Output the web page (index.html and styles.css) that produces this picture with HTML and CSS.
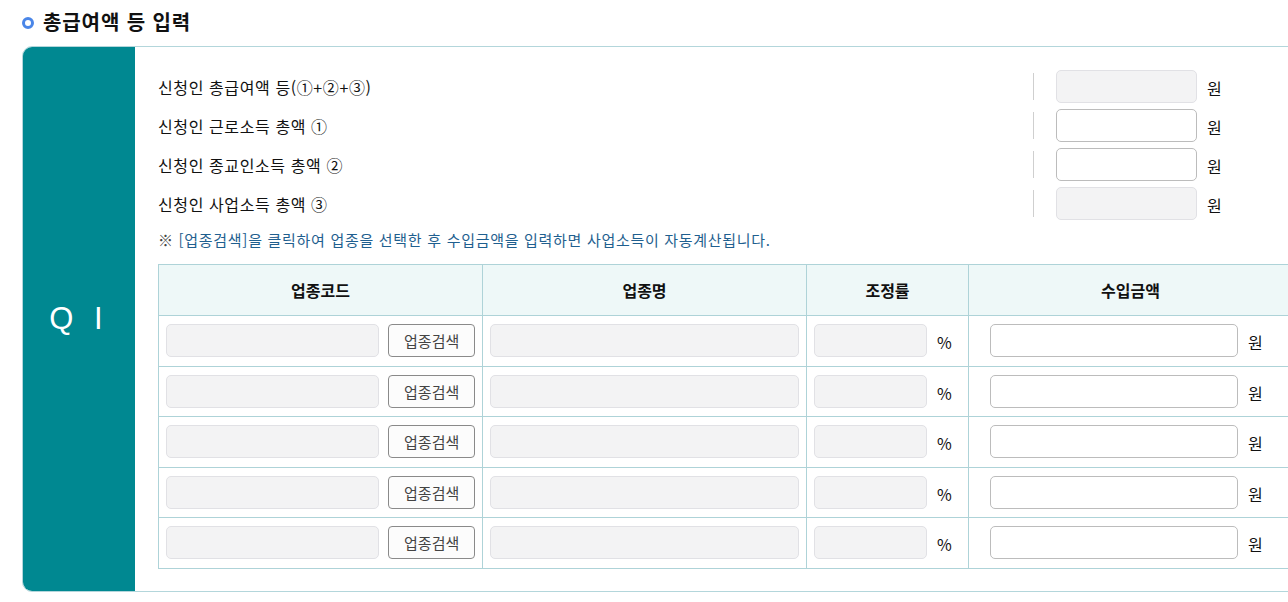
FILE: index.html
```html
<!DOCTYPE html>
<html lang="ko">
<head>
  <meta charset="UTF-8">
  <meta name="viewport" content="width=device-width, initial-scale=1.0">
  <title>총급여액 등 입력</title>
  <link rel="stylesheet" href="styles.css">
</head>
<body>
<h2 class="section-title"><span class="bullet"></span>총급여액 등 입력</h2>

<div class="q-box">
  <div class="q-side">Q I</div>
  <div class="q-body">
    <div class="sum-row">
      <span class="sum-label">신청인 총급여액 등(①+②+③)</span>
      <span class="sum-field"><span class="sep"></span><input class="inp readonly" type="text" readonly><span class="unit">원</span></span>
    </div>
    <div class="sum-row">
      <span class="sum-label">신청인 근로소득 총액 ①</span>
      <span class="sum-field"><span class="sep"></span><input class="inp" type="text"><span class="unit">원</span></span>
    </div>
    <div class="sum-row">
      <span class="sum-label">신청인 종교인소득 총액 ②</span>
      <span class="sum-field"><span class="sep"></span><input class="inp" type="text"><span class="unit">원</span></span>
    </div>
    <div class="sum-row">
      <span class="sum-label">신청인 사업소득 총액 ③</span>
      <span class="sum-field"><span class="sep"></span><input class="inp readonly" type="text" readonly><span class="unit">원</span></span>
    </div>

    <p class="note"><span class="mark">※</span> [업종검색]을 클릭하여 업종을 선택한 후 수입금액을 입력하면 사업소득이 자동계산됩니다.</p>

    <table class="biz-table">
      <colgroup>
        <col class="c-code">
        <col class="c-name">
        <col class="c-rate">
        <col class="c-amount">
      </colgroup>
      <thead>
        <tr>
          <th>업종코드</th>
          <th>업종명</th>
          <th>조정률</th>
          <th>수입금액</th>
        </tr>
      </thead>
      <tbody id="bizRows"></tbody>
    </table>
  </div>
</div>

<script>
  document.addEventListener("DOMContentLoaded", function () {
      const body = document.getElementById("bizRows");
      let html = "";
      for (let i = 0; i < 5; i++) {
          html += '<tr>' +
              '<td><div class="cell-flex"><input class="inp readonly code" type="text" readonly><button class="btn-search" type="button">업종검색</button></div></td>' +
              '<td><div class="cell-flex"><input class="inp readonly name" type="text" readonly></div></td>' +
              '<td><div class="cell-flex"><input class="inp readonly rate" type="text" readonly><span class="unit">%</span></div></td>' +
              '<td><div class="cell-flex amount-cell"><input class="inp amount" type="text"><span class="unit">원</span></div></td>' +
              '</tr>';
      }
      body.innerHTML = html;
  });
</script>
</body>
</html>
```

FILE: styles.css
```css
body {
    font-family: 'Noto Sans CJK KR', 'Noto Sans', sans-serif;
    margin: 0;
    padding: 0;
    color: #111;
    background: #fff;
    overflow: hidden;
}

.section-title {
    display: flex;
    align-items: center;
    margin: 0;
    padding: 8px 0 0 22px;
    height: 28px;
    font-size: 20px;
    font-weight: 700;
    line-height: 28px;
    letter-spacing: 0.9px;
    color: #111;
}

.bullet {
    width: 12px;
    height: 12px;
    border: 3px solid #4a86e8;
    border-radius: 50%;
    box-sizing: border-box;
    margin: 2px 9px 0 0;
}

.q-box {
    display: flex;
    width: 1293px;
    margin: 10px 0 0 22px;
    border: 1px solid #b3d6db;
    border-radius: 10px 0 0 10px;
    overflow: hidden;
    box-sizing: border-box;
}

.q-side {
    width: 112px;
    flex-shrink: 0;
    background: #008891;
    color: #fff;
    font-family: 'Liberation Sans', sans-serif;
    font-size: 31px;
    letter-spacing: 6px;
    display: flex;
    align-items: center;
    justify-content: center;
}

.q-body {
    flex: 1;
    padding: 23px 23px 22px 23px;
}

.sum-row {
    display: flex;
    align-items: center;
    height: 33px;
    margin-bottom: 6px;
}

.sum-label {
    flex: 1;
    font-size: 16px;
    letter-spacing: 0.6px;
    color: #111;
}

.sum-field {
    display: flex;
    align-items: center;
    width: 260px;
}

.sep {
    width: 1px;
    height: 27px;
    background: #cfcfcf;
    margin-right: 22px;
}

.inp {
    height: 33px;
    box-sizing: border-box;
    border: 1px solid #bcbcbc;
    border-radius: 5px;
    background: #fff;
    padding: 0 8px;
    font-family: inherit;
    font-size: 15px;
    outline: none;
}

.inp.readonly {
    background: #f3f3f4;
    border-color: #e1e1e5;
}

.sum-field .inp {
    width: 141px;
}

.unit {
    font-size: 16px;
    color: #111;
    margin-left: 10px;
    padding-top: 3px;
}

.note {
    margin: 9px 0 13px 0;
    font-size: 15px;
    line-height: 22px;
    letter-spacing: 0.7px;
    color: #1f5f8f;
}

.note .mark {
    color: #444;
}

.biz-table {
    width: 1134px;
    table-layout: fixed;
    border-collapse: collapse;
}

.c-code,
.c-name,
.c-amount {
    width: 324px;
}

.c-rate {
    width: 162px;
}

.biz-table th {
    height: 51px;
    background: #eef8f8;
    border: 1px solid #aed3d8;
    font-size: 16px;
    font-weight: 700;
    color: #111;
    box-sizing: border-box;
}

.biz-table td {
    border: 1px solid #aed3d8;
    padding: 8px 7px 8.6px 7px;
}

.cell-flex {
    display: flex;
    align-items: center;
}

.inp.code {
    width: 214px;
}

.inp.name {
    width: 309px;
}

.inp.rate {
    width: 113px;
}

.amount-cell {
    padding-left: 14px;
}

.inp.amount {
    width: 248px;
}

.btn-search {
    width: 87px;
    height: 33px;
    margin-left: 9px;
    border: 1px solid #8a8a8a;
    border-radius: 4px;
    background: #fcfcfc;
    color: #444;
    font-family: inherit;
    font-size: 15px;
    padding: 0;
    cursor: pointer;
}

.btn-search:hover {
    background: #f0f0f0;
}
```
